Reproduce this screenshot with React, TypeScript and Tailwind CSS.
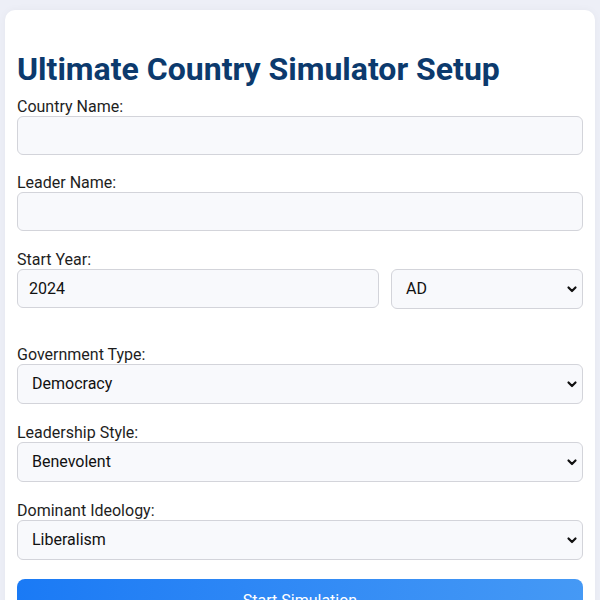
import React from "react";

const Chevron = () => (
  <svg className="pointer-events-none absolute right-[4px] top-1/2 -translate-y-1/2" width="12" height="12" viewBox="0 0 12 12">
    <path d="M2.5 4.5 L6 8 L9.5 4.5" fill="none" stroke="#111" strokeWidth="2.2" strokeLinecap="round" strokeLinejoin="round" />
  </svg>
);

const Label = ({ children }: { children: React.ReactNode }) => (
  <label className="block text-[16px] leading-[19px] text-[#1e1e1e]">{children}</label>
);

const TextInput = ({ value = "" }: { value?: string }) => (
  <div className="h-[39px] w-full rounded-[6px] border border-[#d3d4da] bg-[#f8f9fc] px-[11px] flex items-center text-[16px] text-[#111]">
    {value}
  </div>
);

const Select = ({ value, className = "" }: { value: string; className?: string }) => (
  <div className={"relative h-[40px] rounded-[6px] border border-[#d3d4da] bg-[#f8f9fc] pl-[14px] flex items-center text-[16px] text-[#111] " + className}>
    {value}
    <Chevron />
  </div>
);

export default function App() {
  return (
    <div className="min-h-[600px] w-[600px] bg-[#edeff7] pt-[10px] px-[5px] overflow-hidden" style={{ fontFamily: "Roboto, 'Liberation Sans', sans-serif" }}>
      <div className="rounded-[10px] bg-white px-[12px] pb-[40px] shadow-[0_0_8px_rgba(0,0,0,0.04)] h-[620px]">
        <h1 className="pt-[40px] text-[32px] leading-[38px] font-bold text-[#0c3a6d] mb-[9px]">
          Ultimate Country Simulator Setup
        </h1>
        <div className="mb-[18px]">
          <Label>Country Name:</Label>
          <TextInput />
        </div>
        <div className="mb-[19px]">
          <Label>Leader Name:</Label>
          <TextInput />
        </div>
        <div className="mb-[36px]">
          <Label>Start Year:</Label>
          <div className="flex gap-[12px]">
            <div className="w-[362px]">
              <TextInput value="2024" />
            </div>
            <Select value="AD" className="flex-1 pl-[14px]" />
          </div>
        </div>
        <div className="mb-[19px]">
          <Label>Government Type:</Label>
          <Select value="Democracy" className="w-full" />
        </div>
        <div className="mb-[19px]">
          <Label>Leadership Style:</Label>
          <Select value="Benevolent" className="w-full" />
        </div>
        <div className="mb-[19px]">
          <Label>Dominant Ideology:</Label>
          <Select value="Liberalism" className="w-full" />
        </div>
        <button className="h-[44px] w-full rounded-[8px] bg-gradient-to-r from-[#1a7af5] to-[#4599f5] text-[16px] text-white">
          Start Simulation
        </button>
      </div>
    </div>
  );
}
